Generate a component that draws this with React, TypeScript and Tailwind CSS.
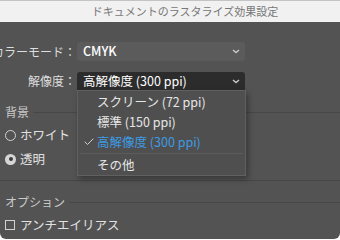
import { Check } from "lucide-react";

const font = { fontFamily: '"Noto Sans CJK JP", "Noto Sans", sans-serif' };

function Chevron() {
  return (
    <svg width="8" height="5" viewBox="0 0 8 5" className="shrink-0">
      <path d="M1 1l3 2.6L7 1" fill="none" stroke="#c8c8c8" strokeWidth="1.4" />
    </svg>
  );
}

function Heading({ label }: { label: string }) {
  return (
    <div className="flex h-[20px] items-center gap-[4px] pl-[5px]">
      <span className="text-[12px] text-[#c9c9c9]">{label}</span>
      <div className="h-px flex-1 bg-[#474747]" />
    </div>
  );
}

export default function App() {
  return (
    <div className="relative h-[240px] w-[340px] overflow-hidden bg-white" style={font}>
      <div className="flex h-[239px] flex-col overflow-hidden rounded-b-[6px] bg-[#535353]">
        <div className="flex h-[22px] shrink-0 items-center justify-center border-t border-[#c4c4c4] bg-[#f1f1f1] pl-[30px] text-[11px] text-[#777]">
          ドキュメントのラスタライズ効果設定
        </div>

        <div className="mt-[20px] flex h-[19px] items-center">
          <div className="flex w-[76px] shrink-0 justify-end whitespace-nowrap text-[12px] text-[#dedede]">カラーモード：</div>
          <div className="ml-[1px] flex h-[19px] w-[168px] items-center justify-between rounded-[3px] bg-[#5b5b5b] pl-[6px] pr-[5px] text-[12.5px] font-medium text-white">
            <span>CMYK</span>
            <Chevron />
          </div>
        </div>

        <div className="mt-[11px] flex h-[18px] items-center">
          <div className="flex w-[76px] shrink-0 justify-end whitespace-nowrap text-[12px] text-[#dedede]">解像度：</div>
          <div className="ml-[1px] flex h-[18px] w-[168px] items-center justify-between rounded-t-[3px] bg-[#2c2c2c] pl-[6px] pr-[5px] text-[12.5px] text-white">
            <span>高解像度 (300 ppi)</span>
            <Chevron />
          </div>
        </div>

        <div className="mt-[12px]">
          <Heading label="背景" />
        </div>
        <div className="mt-[2px] flex h-[22px] items-center gap-[4px] pl-[5px] text-[12.5px] text-[#e2e2e2]">
          <span className="h-[11px] w-[11px] rounded-full border border-[#d2d2d2]" />
          <span>ホワイト</span>
        </div>
        <div className="mt-[2px] flex h-[22px] items-center gap-[4px] pl-[5px] text-[12.5px] text-[#e2e2e2]">
          <span className="flex h-[11px] w-[11px] items-center justify-center rounded-full bg-[#d6d6d6]">
            <span className="h-[4px] w-[4px] rounded-full bg-[#3c3c3c]" />
          </span>
          <span>透明</span>
        </div>

        <div className="mt-[10px] h-px bg-[#474747]" />

        <div className="mt-[11px]">
          <Heading label="オプション" />
        </div>
        <div className="mt-[2px] flex h-[22px] items-center gap-[5px] pl-[5px] text-[12.5px] text-[#e2e2e2]">
          <span className="h-[10px] w-[10px] border border-[#d2d2d2]" />
          <span>アンチエイリアス</span>
        </div>
      </div>

      <div className="absolute left-[77px] top-[90px] h-[86px] w-[169px] border border-[#606060] bg-[#4f4f4f] pt-[1px] text-[12.5px] text-[#e6e6e6] shadow-[2px_3px_6px_rgba(0,0,0,0.35)]">
        <div className="flex h-[20px] items-center pl-[19px]">スクリーン (72 ppi)</div>
        <div className="flex h-[20px] items-center pl-[19px]">標準 (150 ppi)</div>
        <div className="flex h-[20px] items-center text-[#3d9be4]">
          <Check className="ml-[5px] mr-[2px] h-[12px] w-[12px] text-[#d0d0d0]" strokeWidth={2} />
          <span>高解像度 (300 ppi)</span>
        </div>
        <div className="mx-[2px] mt-[1px] h-px bg-[#5c5c5c]" />
        <div className="mt-[1px] flex h-[20px] items-center pl-[19px]">その他</div>
      </div>
    </div>
  );
}
